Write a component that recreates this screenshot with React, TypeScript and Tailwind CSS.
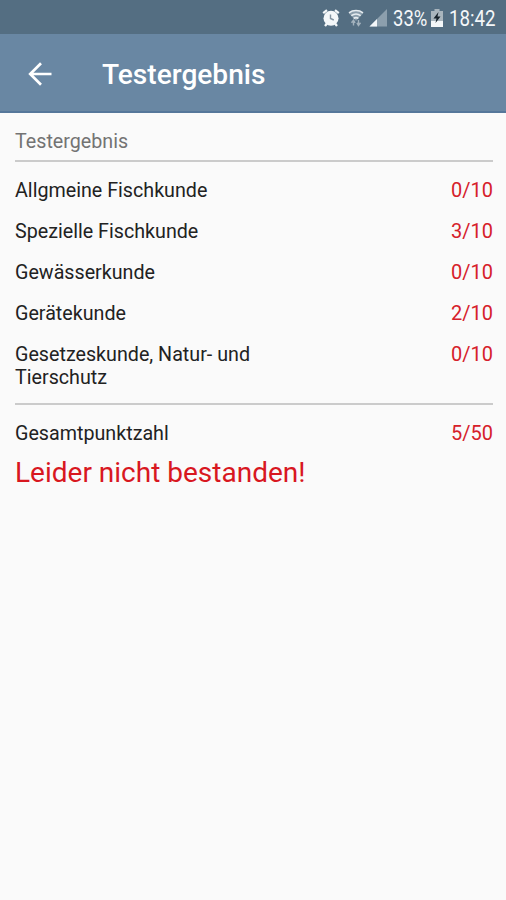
import React from 'react';

type Result = { topic: string; score: string };

const results: Result[] = [
  { topic: 'Allgmeine Fischkunde', score: '0/10' },
  { topic: 'Spezielle Fischkunde', score: '3/10' },
  { topic: 'Gewässerkunde', score: '0/10' },
  { topic: 'Gerätekunde', score: '2/10' },
  { topic: 'Gesetzeskunde, Natur- und Tierschutz', score: '0/10' }
];

function StatusBar() {
  return (
    <div className="flex h-[34px] items-center bg-[#546e82] pl-[322px] pt-[2px] text-[#f4f7f9]">
      <svg width="18" height="18" viewBox="0 0 18 18" fill="none">
        <path d="M1.2 4.2 5 1.2M16.8 4.2 13 1.2M3 17l2-2.5M15 17l-2-2.5" stroke="currentColor" strokeWidth="2.3" />
        <circle cx="9" cy="9.3" r="7.5" fill="currentColor" />
        <path d="M8.5 5.5v4L11.8 11" stroke="#8394a1" strokeWidth="1.4" />
      </svg>
      <svg className="ml-[8px]" width="16" height="18" viewBox="0 0 16 18" fill="none">
        <path d="M.8 4.3C4.5.5 11.5.5 15.2 4.3L8 12z" fill="#8b9eac" />
        <path d="M1 3.8c4-3 10-3 14 0M3.3 6.7c3-2.2 6.4-2.2 9.4 0M5.6 9.4c1.6-1.1 3.2-1.1 4.8 0" stroke="#e6ecf0" strokeWidth="1.6" />
        <path d="M5.5 11v5.5M3.5 13.8l2-2.6 1.6 2.6M10.5 11v5.5M8.9 13.8l1.6 2.6 2-2.6" stroke="#a3b2bd" strokeWidth="1.4" />
      </svg>
      <svg className="ml-[5px]" width="18" height="18" viewBox="0 0 18 18">
        <path d="M18 0v17.5H.5z" fill="#8c9fad" />
        <path d="M8 10v7.5H.5z" fill="currentColor" />
      </svg>
      <span className="ml-[6px] mt-[1px] w-[35px] whitespace-nowrap text-[21.5px] leading-6">
        <span className="inline-block origin-left scale-x-[0.86]">33%</span>
      </span>
      <svg className="ml-[3px]" width="12" height="18" viewBox="0 0 12 18">
        <path d="M3.5 0h5v2H12v10H0V2h3.5z" fill="#a9b5bd" />
        <path d="M0 12h12v6H0z" fill="currentColor" />
        <path d="M7.5 3 2.5 9.5h3L4.5 14l5-6.5h-3z" fill="#17222b" />
      </svg>
      <span className="ml-[6px] mt-[1px] whitespace-nowrap text-[21.5px] leading-6">
        <span className="inline-block origin-left scale-x-[0.87]">18:42</span>
      </span>
    </div>
  );
}

function ResultRow({ topic, score }: Result) {
  return (
    <div className="flex justify-between py-[9px]">
      <span className="w-[240px] text-[19.7px] text-[#222222]">{topic}</span>
      <span className="text-[#d6202a]">{score}</span>
    </div>
  );
}

export default function App() {
  return (
    <div className="h-[900px] w-full overflow-hidden bg-[#fafafa] font-['Roboto','Noto_Sans',sans-serif]">
      <StatusBar />
      <header className="flex h-[79px] items-center border-b-2 border-[#56779a] bg-[#6987a3] pl-[28px] text-white">
        <button aria-label="Zurück" className="mt-[2px]">
          <svg width="24" height="24" viewBox="0 0 24 24" fill="none" stroke="currentColor" strokeWidth="2.7">
            <path d="M23.5 12H2.5M13 1.2 2.2 12 13 22.8" />
          </svg>
        </button>
        <h1 className="ml-[50px] mt-[5px] text-[28.1px] font-medium leading-8">Testergebnis</h1>
      </header>

      <main className="pl-[15px] pr-[13px] pt-[17px] text-[20px] leading-[23px]">
        <h2 className="text-[19.7px] text-[#737373]">Testergebnis</h2>
        <div className="mb-[8px] mt-[7px] h-[2px] bg-[#cbcbcb]" />
        {results.map(result => (
          <ResultRow key={result.topic} topic={result.topic} score={result.score} />
        ))}
        <div className="mb-[8px] mt-[5px] h-[2px] bg-[#cbcbcb]" />
        <ResultRow topic="Gesamtpunktzahl" score="5/50" />
        <p className="mt-[3px] text-[28px] leading-8 text-[#d8171f]">Leider nicht bestanden!</p>
      </main>
    </div>
  );
}
